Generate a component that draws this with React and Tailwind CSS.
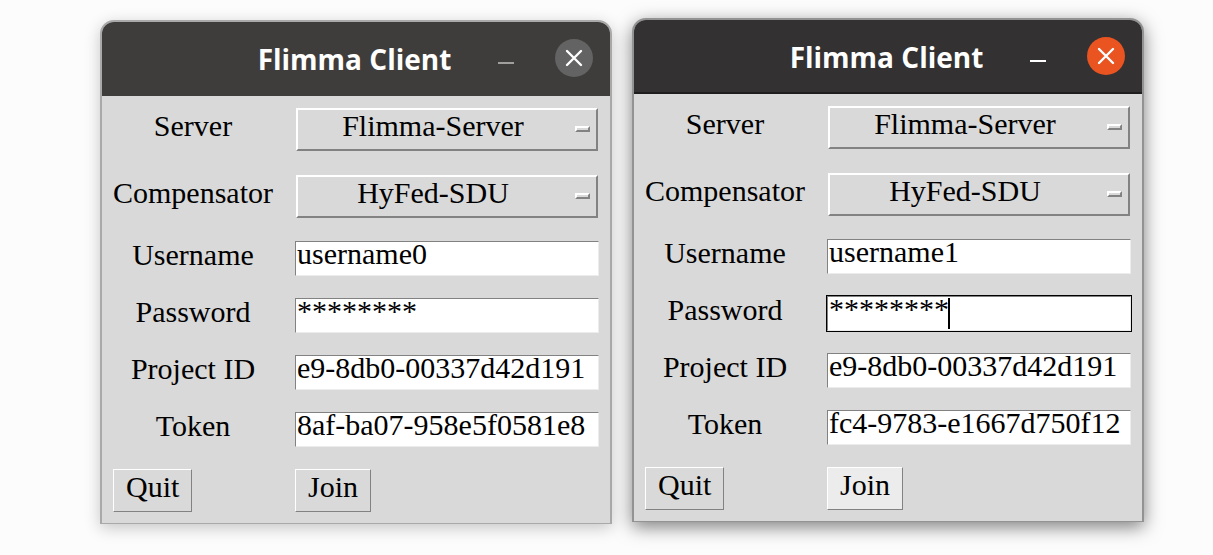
import React, { useId, useState } from "react";
import clsx from "clsx";

function TitleBar({ active }) {
  return (
    <header
      className={clsx(
        "grid h-[74px] grid-cols-[1fr_auto_1fr] items-center rounded-t-xl border-b-2 pr-[17px] pl-[14px]",
        active ? "border-[#1f1d1e] bg-[#333132]" : "border-[#3f3d3b] bg-[#3f3d3b]"
      )}
    >
      <span />
      <h1 className="pt-0.5 font-['Open_Sans',sans-serif] text-[28px] leading-9 font-bold text-white">
        Flimma Client
      </h1>
      <div className="flex items-center justify-end gap-[37px]">
        <button type="button" aria-label="Minimize" className="flex h-[38px] w-6 items-center justify-center">
          <svg viewBox="0 0 16 16" className="size-4" aria-hidden="true">
            <rect x="0" y="12" width="16" height="2" fill={active ? "#ffffff" : "#a09f9d"} />
          </svg>
        </button>
        <button
          type="button"
          aria-label="Close"
          className={clsx(
            "flex size-[38px] items-center justify-center rounded-full",
            active ? "bg-[#e95420]" : "bg-[#636363]"
          )}
        >
          <svg viewBox="0 0 18 18" className="size-[18px]" aria-hidden="true">
            <path d="M2 2L16 16M16 2L2 16" fill="none" stroke="#ffffff" strokeWidth="2.4" strokeLinecap="round" />
          </svg>
        </button>
      </div>
    </header>
  );
}

function Label({ htmlFor, children }) {
  return (
    <label htmlFor={htmlFor} className="flex items-center justify-center pb-[7px] leading-6 whitespace-nowrap">
      {children}
    </label>
  );
}

function SelectRow({ label, value }) {
  const id = useId();
  return (
    <>
      <Label htmlFor={id}>{label}</Label>
      <div className="relative p-px">
        <select
          id={id}
          defaultValue={value}
          className="block h-[43px] w-full appearance-none rounded-none border-2 border-t-white border-r-[#828282] border-b-[#828282] border-l-white bg-[#d9d9d9] pr-7 pb-[7px] text-center leading-8 outline-none"
        >
          <option>{value}</option>
        </select>
        <span className="pointer-events-none absolute top-[19px] right-[9px] h-1.5 w-[15px] border-2 border-t-white border-r-[#828282] border-b-[#828282] border-l-white bg-[#d9d9d9]" />
      </div>
    </>
  );
}

function InputRow({ label, value, focused }) {
  const id = useId();
  const [text, setText] = useState(value);
  return (
    <>
      <Label htmlFor={id}>{label}</Label>
      <div
        className={clsx(
          "relative flex h-[35px] items-center border border-t-[#828282] border-r-[#ececec] border-b-[#ececec] border-l-[#828282] bg-white pb-[11px]",
          focused && "ring-1 ring-black"
        )}
      >
        <input
          id={id}
          type="text"
          autoComplete="off"
          value={text}
          onChange={(e) => setText(e.target.value)}
          className="block h-9 w-full shrink-0 bg-transparent pl-px outline-none"
        />
        {focused && <span className="pointer-events-none absolute top-px left-[120px] h-[31px] w-0.5 bg-black" />}
      </div>
    </>
  );
}

function PushButton({ children, highlighted }) {
  return (
    <button
      type="button"
      className={clsx(
        "h-[43px] justify-self-start border border-t-white border-r-[#828282] border-b-[#828282] border-l-white px-3 pb-[7px] leading-6",
        highlighted ? "bg-[#ececec]" : "bg-[#d9d9d9]"
      )}
    >
      {children}
    </button>
  );
}

function ClientWindow({ active, username, token }) {
  return (
    <section
      className={clsx(
        "min-w-0 flex-1 rounded-t-[14px] border-2 border-b bg-[#d9d9d9]",
        active
          ? "border-[#939393] shadow-[0_5px_18px_rgba(0,0,0,0.5)]"
          : "mt-0.5 border-[#a9a9a9] shadow-[0_4px_16px_rgba(0,0,0,0.22)]"
      )}
    >
      <TitleBar active={active} />
      <form className="grid grid-cols-[160px_minmax(0,1fr)] gap-[22px] p-[11px] font-['Liberation_Serif',serif] text-[30px] text-black">
        <SelectRow label="Server" value="Flimma-Server" />
        <SelectRow label="Compensator" value="HyFed-SDU" />
        <InputRow label="Username" value={username} />
        <InputRow label="Password" value="********" focused={active} />
        <InputRow label="Project ID" value="e9-8db0-00337d42d191" />
        <InputRow label="Token" value={token} />
        <PushButton>Quit</PushButton>
        <PushButton highlighted={active}>Join</PushButton>
      </form>
    </section>
  );
}

export default function App() {
  return (
    <main className="flex min-h-screen items-start gap-5 bg-[#fcfcfc] pt-[18px] pr-[69px] pb-8 pl-[100px]">
      <ClientWindow username="username0" token="8af-ba07-958e5f0581e8" />
      <ClientWindow active username="username1" token="fc4-9783-e1667d750f12" />
    </main>
  );
}
